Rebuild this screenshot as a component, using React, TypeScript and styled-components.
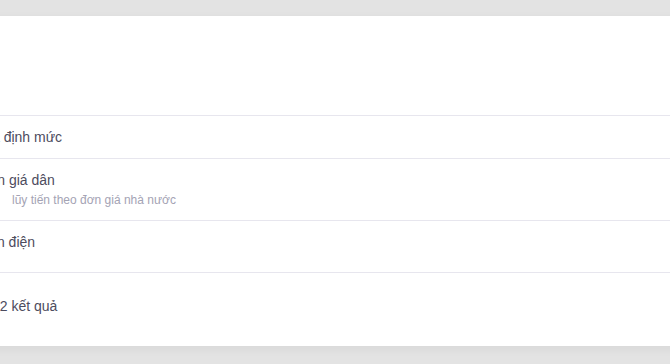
import React from 'react';
import styled, { createGlobalStyle } from 'styled-components';

const Global = createGlobalStyle`
  html, body {
    margin: 0;
    background: #e3e3e3;
    font-family: "Liberation Sans", Arial, sans-serif;
    overflow: hidden;
  }
`;

const Page = styled.div`
  padding-top: 16px;
  height: 364px;
  box-sizing: border-box;
`;

// the card is wider than the window: its left part sits off-screen
const Card = styled.div`
  margin-left: -40px;
  width: calc(100% + 80px);
  background: #fff;
  box-shadow: 0 3px 10px rgba(0, 0, 0, 0.05);
`;

const Header = styled.div`
  height: 99px;
  border-bottom: 1px solid #e7e6ee;
`;

const Row = styled.div<{ $minHeight?: number }>`
  display: flex;
  flex-direction: column;
  padding: 12px 0 12px 18px;
  min-height: ${(p) => (p.$minHeight ? `${p.$minHeight}px` : 'auto')};
  box-sizing: border-box;
  border-bottom: 1px solid #e7e6ee;
`;

const Title = styled.div`
  font-size: 14px;
  line-height: 18px;
  color: #4d4c5e;
  white-space: nowrap;
`;

const Subtitle = styled.div`
  margin-top: 3px;
  padding-left: 34px;
  font-size: 12px;
  line-height: 16px;
  color: #a4a3b4;
  white-space: nowrap;
`;

const Footer = styled.div`
  padding: 24px 0 31px 18px;
  font-size: 14px;
  line-height: 18px;
  color: #4d4c5e;
  white-space: nowrap;
`;

const items = [
  { title: 'Giá định mức' },
  { title: 'Đơn giá dân', sub: 'lũy tiến theo đơn giá nhà nước' },
  { title: 'Tiền điện', minHeight: 52 },
];

export default function App() {
  return (
    <Page>
      <Global />
      <Card>
        <Header />
        {items.map((it) => (
          <Row key={it.title} $minHeight={it.minHeight}>
            <Title>{it.title}</Title>
            {it.sub && <Subtitle>{it.sub}</Subtitle>}
          </Row>
        ))}
        <Footer>Có 2 kết quả</Footer>
      </Card>
    </Page>
  );
}
